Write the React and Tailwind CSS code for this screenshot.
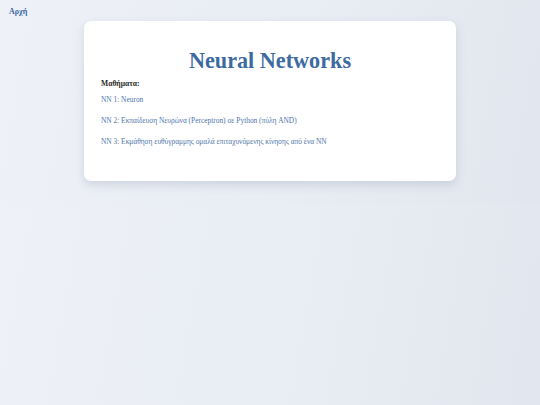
export default function App() {
  const lessons = [
    "NN 1: Neuron",
    "NN 2: Εκπαίδευση Νευρώνα (Perceptron) σε Python (πύλη AND)",
    "NN 3: Εκμάθηση ευθύγραμμης ομαλά επιταχυνόμενης κίνησης από ένα NN",
  ];

  return (
    <div className="min-h-screen bg-[linear-gradient(100deg,#eef1f7_0%,#e9edf4_50%,#e2e7ef_100%)] bg-[size:100%_205px] font-['Liberation_Serif',Georgia,serif]">
      <nav className="px-[9px] pt-[8px] h-[21px] flex">
        <a className="block text-[8px] font-bold text-[#3b6aa3] leading-[8px]">Αρχή</a>
      </nav>
      <div className="mx-auto w-[372px] h-[160px] bg-white rounded-[7px] shadow-[0_4px_10px_rgba(120,135,160,0.25)] px-[17px] pt-[27px]">
        <h1 className="text-center text-[22.2px] font-bold text-[#3d6b9f] leading-[26px] mb-[5px]">
          Neural Networks
        </h1>
        <p className="text-[7.6px] font-bold text-[#2b2b2b] leading-[10px] mb-[6px]">Μαθήματα:</p>
        <ul className="flex flex-col gap-[11px]">
          {lessons.map((l) => (
            <li key={l} className="text-[7.4px] text-[#5075aa] leading-[10px]">
              {l}
            </li>
          ))}
        </ul>
      </div>
    </div>
  );
}
